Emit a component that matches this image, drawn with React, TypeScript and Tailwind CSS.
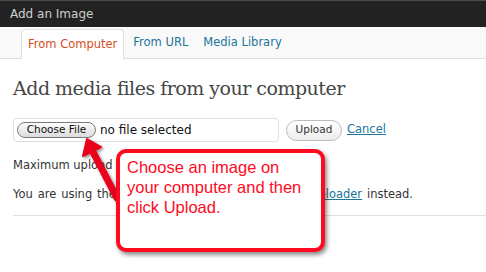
import React from "react";

export default function App() {
  const sans = { fontFamily: '"DejaVu Sans", sans-serif' };
  return (
    <div className="relative w-[486px] h-[272px] overflow-hidden bg-white" style={sans}>
      <div className="h-[27px] bg-[#222222] border-t border-[#4a4a4a] flex items-center pl-[10px] text-[12px] text-[#cfcfcf]">
        Add an Image
      </div>
      <div className="h-[32px] bg-[#f9f9f9] border-b border-[#dfdfdf] flex items-end">
        <div className="ml-[21px] h-[30px] -mb-px px-[6px] bg-white border border-b-0 border-[#dfdfdf] rounded-t-[4px] flex items-center text-[11.5px] text-[#d54e21]">
          From Computer
        </div>
        <div className="ml-[9px] h-[30px] flex items-center text-[11.5px] text-[#21759b]">From URL</div>
        <div className="ml-[15px] h-[30px] flex items-center text-[11.5px] text-[#21759b]">Media Library</div>
      </div>
      <div className="pl-[13px]">
        <h3 className="mt-[17px] text-[19px] leading-[24px] text-[#464646]" style={{ fontFamily: '"DejaVu Serif", serif', letterSpacing: "-0.5px" }}>
          Add media files from your computer
        </h3>
        <div className="mt-[18px] flex items-center">
          <div className="w-[266px] h-[24px] border border-[#dfdfdf] rounded-[4px] flex items-center pl-[3px]">
            <div className="h-[16px] w-[79px] rounded-full border border-[#7a7a7a] bg-gradient-to-b from-[#fdfdfd] to-[#dcdcdc] flex items-center justify-center text-[10.5px] text-[#111]">
              Choose File
            </div>
            <span className="ml-[4px] text-[12px] text-[#111]">no file selected</span>
          </div>
          <div className="ml-[7px] h-[21px] w-[56px] rounded-full border border-[#bbbbbb] bg-gradient-to-b from-[#ffffff] to-[#ededed] flex items-center justify-center text-[10.5px] text-[#333]">
            Upload
          </div>
          <span className="ml-[5px] text-[11.5px] text-[#21759b] underline">Cancel</span>
        </div>
        <p className="mt-[15px] text-[11.5px] text-[#333]">Maximum upload file size: 64MB.</p>
        <p className="mt-[12px] text-[11.5px] text-[#333]" style={{ wordSpacing: "1.2px" }}>
          You are using the Browser uploader. Try the <span className="text-[#21759b] underline">Flash uploader</span> instead.
        </p>
        <div className="mt-[11px] border-t border-[#dfdfdf]" />
      </div>

      <svg className="absolute left-0 top-0" width="486" height="272" viewBox="0 0 486 272">
        <defs>
          <filter id="sh" x="-20%" y="-20%" width="140%" height="140%">
            <feDropShadow dx="1.5" dy="1.5" stdDeviation="1.5" floodColor="#000" floodOpacity="0.45" />
          </filter>
        </defs>
        <g filter="url(#sh)">
          <line x1="93" y1="152" x2="117" y2="198" stroke="#e8001a" strokeWidth="7" strokeLinecap="round" />
          <polygon points="87,139 83,156 101,147" fill="#e8001a" stroke="#e8001a" strokeWidth="2" strokeLinejoin="round" />
        </g>
      </svg>

      <div
        className="absolute left-[116px] top-[149px] w-[209px] h-[103px] bg-white border-[4px] border-[#ff0a1e] rounded-[10px] shadow-[2px_3px_4px_rgba(0,0,0,0.45)] pl-[7px] pt-[4px] text-[16.5px] leading-[20px] text-[#ff0a1e]"
        style={{ fontFamily: '"Liberation Sans", Arial, sans-serif' }}
      >
        Choose an image on<br />your computer and then<br />click Upload.
      </div>
    </div>
  );
}
